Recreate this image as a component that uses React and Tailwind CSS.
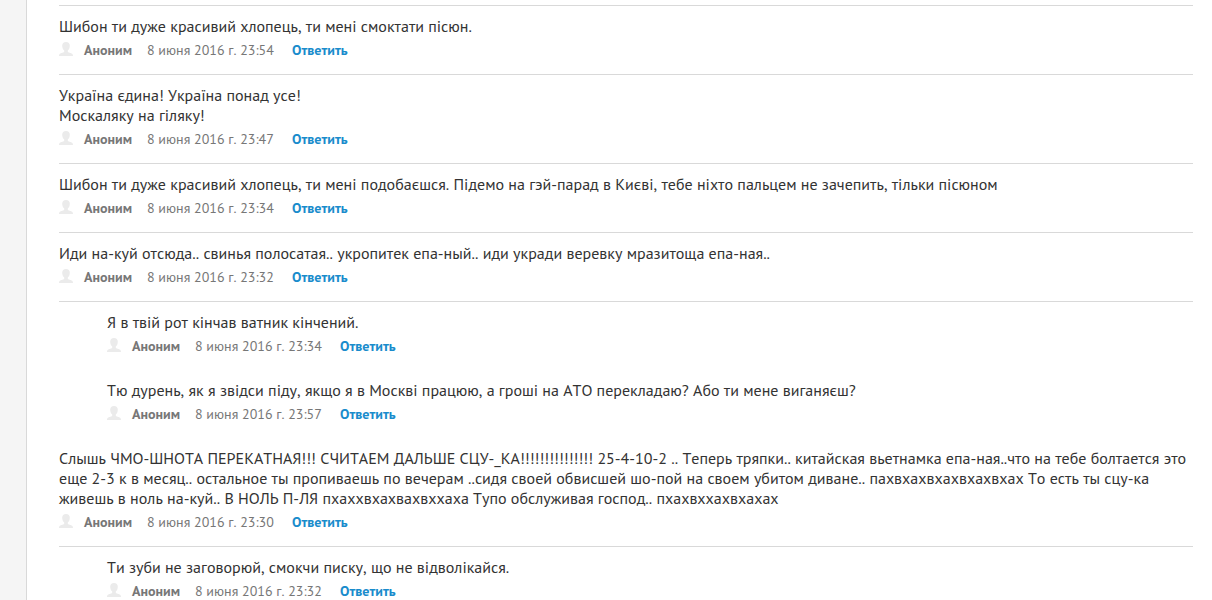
const comments = [
  {
    text: "Шибон ти дуже красивий хлопець, ти мені смоктати пісюн.",
    date: "8 июня 2016 г. 23:54",
    divider: true,
  },
  {
    text: "Україна єдина! Україна понад усе!\nМоскаляку на гіляку!",
    date: "8 июня 2016 г. 23:47",
    divider: true,
  },
  {
    text: "Шибон ти дуже красивий хлопець, ти мені подобаєшся. Підемо на гэй-парад в Києві, тебе ніхто пальцем не зачепить, тільки пісюном",
    date: "8 июня 2016 г. 23:34",
    divider: true,
  },
  {
    text: "Иди на-куй отсюда.. свинья полосатая.. укропитек епа-ный.. иди укради веревку мразитоща епа-ная..",
    date: "8 июня 2016 г. 23:32",
    divider: true,
  },
  {
    text: "Я в твій рот кінчав ватник кінчений.",
    date: "8 июня 2016 г. 23:34",
    divider: true,
    reply: true,
  },
  {
    text: "Тю дурень, як я звідси піду, якщо я в Москві працюю, а гроші на АТО перекладаю? Або ти мене виганяєш?",
    date: "8 июня 2016 г. 23:57",
    reply: true,
  },
  {
    text: "Слышь ЧМО-ШНОТА ПЕРЕКАТНАЯ!!! СЧИТАЕМ ДАЛЬШЕ СЦУ-_КА!!!!!!!!!!!!!!! 25-4-10-2 .. Теперь тряпки.. китайская вьетнамка епа-ная..что на тебе болтается это еще 2-3 к в месяц.. остальное ты пропиваешь по вечерам ..сидя своей обвисшей шо-пой на своем убитом диване.. пахвхахвхахвхахвхах То есть ты сцу-ка живешь в ноль на-куй.. В НОЛЬ П-ЛЯ пхаххвхахвахвххаха Тупо обслуживая господ.. пхахвххахвхахах",
    date: "8 июня 2016 г. 23:30",
  },
  {
    text: "Ти зуби не заговорюй, смокчи писку, що не відволікайся.",
    date: "8 июня 2016 г. 23:32",
    divider: true,
    reply: true,
  },
];

function UserIcon() {
  return (
    <svg className="mt-0.5 h-3.5 w-3.5 shrink-0 text-[#ebebeb]" viewBox="0 0 14 14" fill="currentColor" aria-hidden="true">
      <path d="M7 0C4.5 0 3.2 1.500 3.200 3.700c0 2.200.9 3.900 2 4.800v1.200c-.5.6-1.500.8-2.700 1.200C.6 11.500 0 12.200 0 14h14c0-1.800-.6-2.500-2.500-3.100-1.200-.4-2.200-.6-2.700-1.200V8.500c1.100-.9 2-2.600 2-4.800C10.800 1.500 9.500 0 7 0z" />
    </svg>
  );
}

function Comment({ text, date, divider, reply }) {
  return (
    <li className={divider ? "border-t border-[#d9d9d9]" : ""}>
      <article className={reply ? "pt-2.5 pb-3.5 pl-12" : "pt-2.5 pb-3.5"}>
        <p className="text-base leading-5 whitespace-pre-line text-[#333333]">{text}</p>
        <div className="mt-1 flex text-sm leading-5 text-[#777777]">
          <UserIcon />
          <span className="ml-[11px] w-[63px] font-bold">Аноним</span>
          <time className="w-[145px]">{date}</time>
          <a href="#reply" className="font-bold text-[#1a8ccc]">
            Ответить
          </a>
        </div>
      </article>
    </li>
  );
}

export default function App() {
  return (
    <div className="flex min-h-screen bg-white font-['PT_Sans','Noto_Sans',sans-serif] [font-kerning:none]">
      <aside className="w-[27px] shrink-0 border-r border-[#d9d9d9] bg-[#f5f5f5]" />
      <main className="min-w-0 flex-1 pt-[5px] pr-[19px] pl-8">
        <ul>
          {comments.map((comment, index) => (
            <Comment key={index} {...comment} />
          ))}
        </ul>
      </main>
    </div>
  );
}
